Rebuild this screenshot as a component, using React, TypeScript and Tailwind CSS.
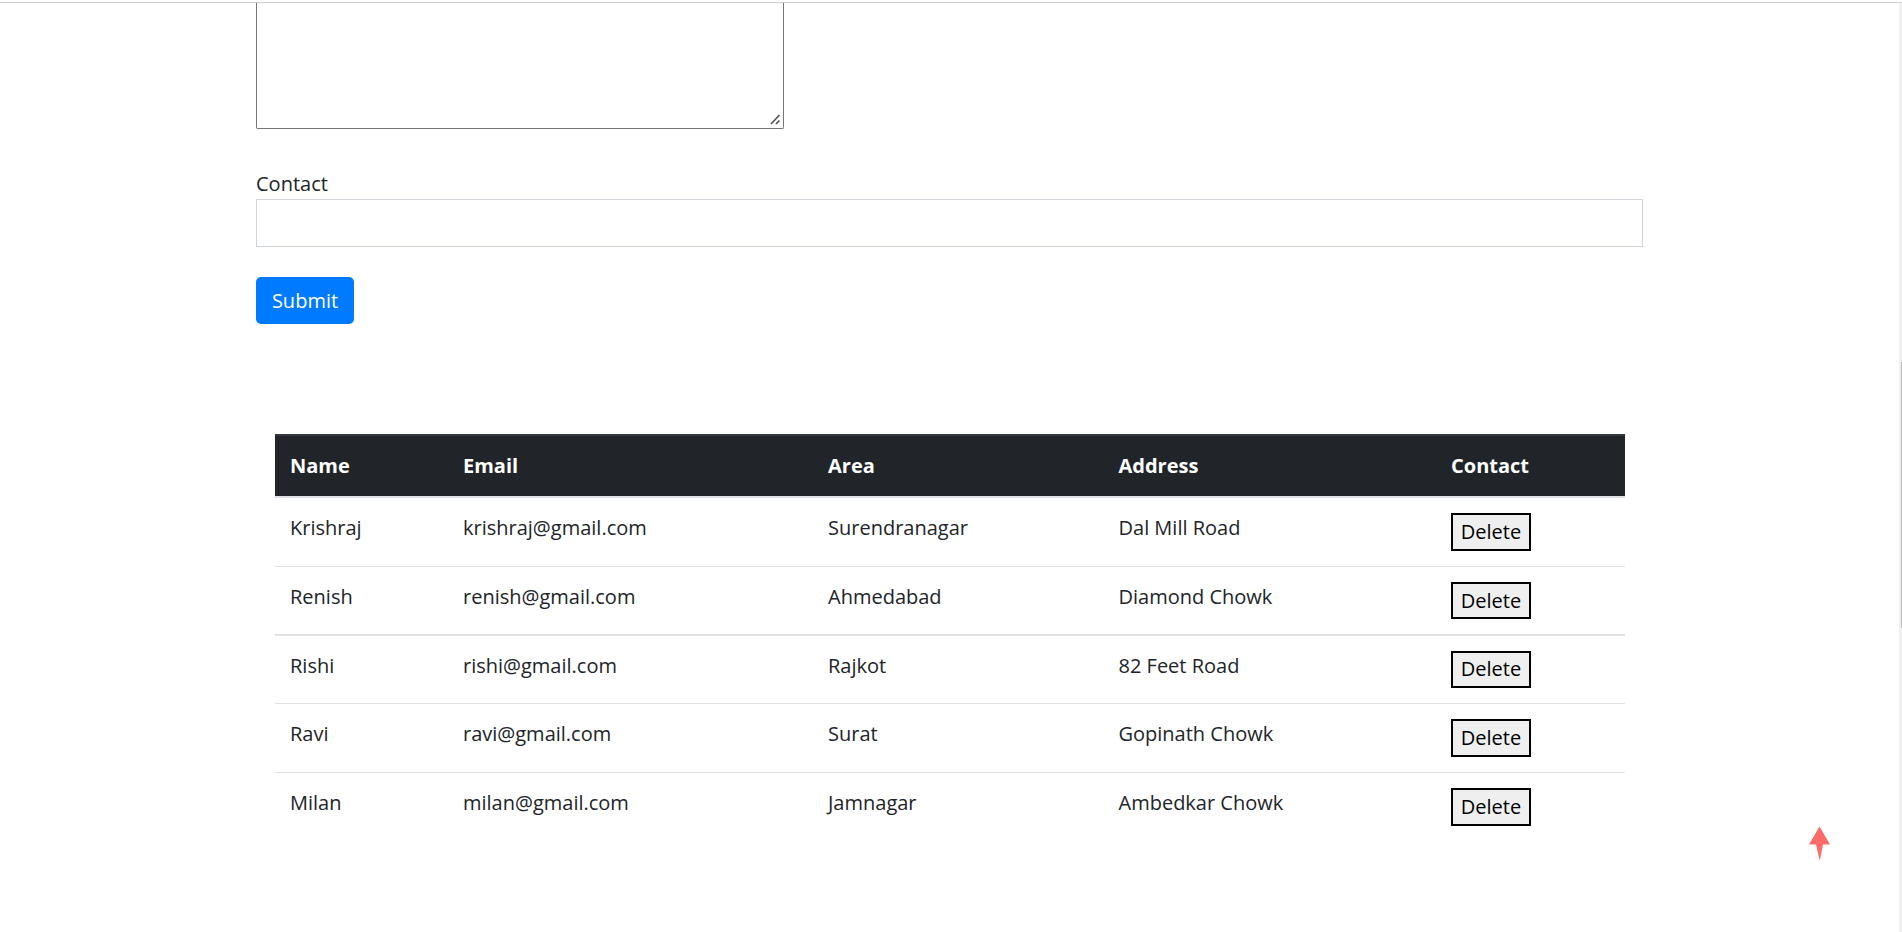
const rows = [
  { name: "Krishraj", email: "krishraj@gmail.com", area: "Surendranagar", address: "Dal Mill Road", height: "h-[68px]", button: "h-[38px]", line: "border-b border-[#dee2e6]" },
  { name: "Renish", email: "renish@gmail.com", area: "Ahmedabad", address: "Diamond Chowk", height: "h-[67px]", button: "h-[37px]", line: "border-b-2 border-[#dee2e6]" },
  { name: "Rishi", email: "rishi@gmail.com", area: "Rajkot", address: "82 Feet Road", height: "h-[67px]", button: "h-[37px] pb-[2px]", line: "border-b border-[#dee2e6]" },
  { name: "Ravi", email: "ravi@gmail.com", area: "Surat", address: "Gopinath Chowk", height: "h-[68px]", button: "h-[38px]", line: "border-b border-[#dee2e6]" },
  { name: "Milan", email: "milan@gmail.com", area: "Jamnagar", address: "Ambedkar Chowk", height: "h-[68px]", button: "h-[38px]", line: "" },
];

const columns = "grid grid-cols-[173px_365px_290.5px_332.5px_1fr] pl-[15px]";

export default function App() {
  return (
    <div className="flex h-[932px] w-full flex-col overflow-hidden bg-white font-['Open_Sans',sans-serif] text-[20px] leading-[30px] font-normal text-[#212529]">
      <div className="h-[3px] shrink-0 border-b border-[#cccccc]" />
      <div className="flex flex-1">
        <main className="flex w-[1899px] flex-col pl-[256px]">
          <div className="relative h-[126px] w-[528px] rounded-b-[2px] border border-t-0 border-[#767676]">
            <svg className="absolute right-[2px] bottom-[3px]" width="11" height="11" viewBox="0 0 11 11" fill="none" stroke="#555" strokeWidth="1.7">
              <path d="M1 10L9.5 1M6 10L9.5 6.5" />
            </svg>
          </div>
          <label className="mt-[40px] h-[30px]">Contact</label>
          <input className="h-[48px] w-[1387px] border border-[#ced4da]" />
          <button className="mt-[30px] h-[47px] w-[98px] rounded-[5px] bg-[#007bff] text-white">Submit</button>
          <section className="mt-[110px] ml-[19px] w-[1350px]">
            <div className={`${columns} h-[64px] items-center border-t-2 border-b-2 border-t-[#32383e] border-b-[#dee2e6] bg-[#212529] font-bold text-white`}>
              <span>Name</span>
              <span>Email</span>
              <span>Area</span>
              <span>Address</span>
              <span>Contact</span>
            </div>
            {rows.map((r) => (
              <div key={r.name} className={`${columns} box-content ${r.height} ${r.line} w-[1335px] items-start`}>
                <span className="pt-[15px]">{r.name}</span>
                <span className="pt-[15px]">{r.email}</span>
                <span className="pt-[15px]">{r.area}</span>
                <span className="pt-[15px]">{r.address}</span>
                <button className={`mt-[15px] w-[80px] border-2 border-black bg-[#efefef] leading-none text-black ${r.button}`}>Delete</button>
              </div>
            ))}
          </section>
        </main>
        <div className="flex w-[3px] justify-end bg-[#f0f0f0]">
          <div className="mt-[359px] h-[266px] w-px bg-[#bcbcbc]" />
        </div>
      </div>
      <svg className="absolute top-[826px] left-[1808px]" width="24" height="36" viewBox="0 0 24 36" fill="#ff6b6b">
        <path d="M11.5 0.5L22 18.5H15L11.8 35L8 18.5H1Z" />
      </svg>
    </div>
  );
}
